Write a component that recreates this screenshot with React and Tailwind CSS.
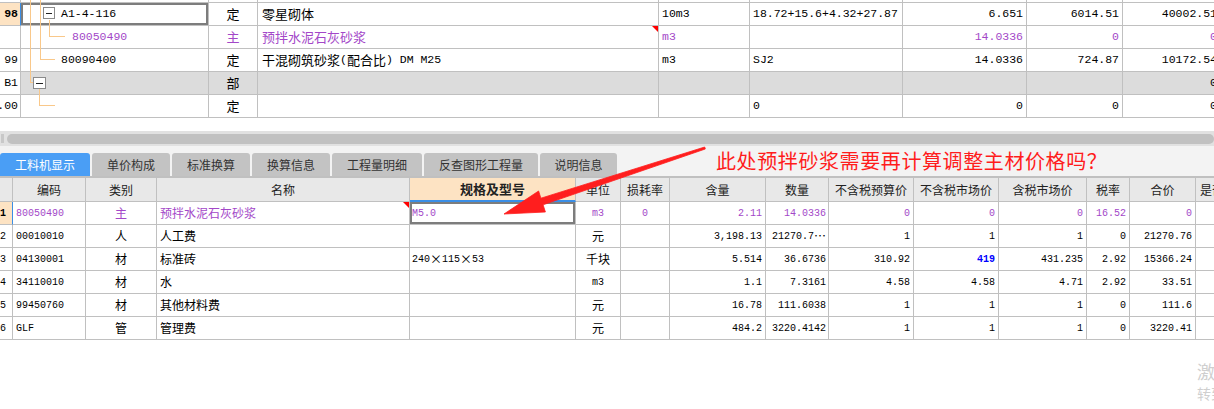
import React from 'react';

const PURPLE = 'text-[#a347c8]';
const LINE = 'border-[#c0c0c0]';

const TOP_LATIN = "font-['Liberation_Mono',monospace] text-[11.5px]";
const TOP_CJK = "font-['Noto_Sans_CJK_SC',sans-serif] text-[13px]";
const BOT_LATIN = "font-['Liberation_Mono',monospace] text-[10px]";
const BOT_CJK = "font-['Noto_Sans_CJK_SC',sans-serif] text-[12px]";

// ascii runs and CJK runs get different fonts, like the SimSun grid
const mix = (text, latin, cjk) =>
  String(text)
    .split(/([^\x00-\x7F]+)/)
    .map((part, i) => (part ? <span key={i} className={i % 2 ? cjk : latin}>{part}</span> : null));

const Flag = () => (
  <span className="absolute right-0 top-0 w-0 h-0 border-l-[6px] border-l-transparent border-t-[6px] border-t-[#ff0000]" />
);

const TOP_COLS = [
  { w: 'w-[21px]', a: 'justify-end pr-[2px]' },
  { w: 'w-[188px]', a: 'justify-start' },
  { w: 'w-[49px]', a: 'justify-center' },
  { w: 'w-[401px]', a: 'justify-start pl-[4px]' },
  { w: 'w-[91px]', a: 'justify-start pl-[3px]' },
  { w: 'w-[153px]', a: 'justify-start pl-[3px]' },
  { w: 'w-[124px]', a: 'justify-end pr-[3px]' },
  { w: 'w-[96px]', a: 'justify-end pr-[3px]' },
  { w: 'w-[98px]', a: 'justify-end pr-[3px]' },
];

const topRows = [
  { cells: ['98', 'A1-4-116', '定', '零星砌体', '10m3', '18.72+15.6+4.32+27.87', '6.651', '6014.51', '40002.51'], indent: 'pl-[40px]', current: true },
  { cells: ['', '80050490', '主', '预拌水泥石灰砂浆', 'm3', '', '14.0336', '0', '0'], indent: 'pl-[51px]', purple: true, flag: true },
  { cells: ['99', '80090400', '定', '干混砌筑砂浆(配合比) DM M25', 'm3', 'SJ2', '14.0336', '724.87', '10172.54'], indent: 'pl-[40px]' },
  { cells: ['B1', '', '部', '', '', '', '', '', '0'], indent: 'pl-[40px]', gray: true },
  { cells: ['1.00', '', '定', '', '', '0', '0', '0', '0'], indent: 'pl-[40px]' },
];

const BOT_COLS = [
  { w: 'w-[13px]', a: 'justify-start' },
  { w: 'w-[73px]', a: 'justify-start pl-[3px]' },
  { w: 'w-[71px]', a: 'justify-center' },
  { w: 'w-[253px]', a: 'justify-start pl-[3px]' },
  { w: 'w-[166px]', a: 'justify-start pl-[2px]' },
  { w: 'w-[45px]', a: 'justify-center' },
  { w: 'w-[49px]', a: 'justify-center' },
  { w: 'w-[96px]', a: 'justify-end pr-[3px]' },
  { w: 'w-[63px]', a: 'justify-end pr-[2px]' },
  { w: 'w-[85px]', a: 'justify-end pr-[3px]' },
  { w: 'w-[85px]', a: 'justify-end pr-[3px]' },
  { w: 'w-[88px]', a: 'justify-end pr-[3px]' },
  { w: 'w-[43px]', a: 'justify-end pr-[3px]' },
  { w: 'w-[66px]', a: 'justify-end pr-[3px]' },
  { w: 'w-[60px]', a: 'justify-start' },
];

const headers = ['', '编码', '类别', '名称', '规格及型号', '单位', '损耗率', '含量', '数量', '不含税预算价', '不含税市场价', '含税市场价', '税率', '合价', '是否暂估'];

const botRows = [
  ['1', '80050490', '主', '预拌水泥石灰砂浆', 'M5.0', 'm3', '0', '2.11', '14.0336', '0', '0', '0', '16.52', '0', ''],
  ['2', '00010010', '人', '人工费', '', '元', '', '3,198.13', '21270.7…', '1', '1', '1', '0', '21270.76', ''],
  ['3', '04130001', '材', '标准砖', '240×115×53', '千块', '', '5.514', '36.6736', '310.92', '419', '431.235', '2.92', '15366.24', ''],
  ['4', '34110010', '材', '水', '', 'm3', '', '1.1', '7.3161', '4.58', '4.58', '4.71', '2.92', '33.51', ''],
  ['5', '99450760', '材', '其他材料费', '', '元', '', '16.78', '111.6038', '1', '1', '1', '0', '111.6', ''],
  ['6', 'GLF', '管', '管理费', '', '元', '', '484.2', '3220.4142', '1', '1', '1', '0', '3220.41', ''],
];

const tabs = [
  { label: '工料机显示', w: 'w-[90px]', active: true },
  { label: '单价构成', w: 'w-[78px]' },
  { label: '标准换算', w: 'w-[78px]' },
  { label: '换算信息', w: 'w-[78px]' },
  { label: '工程量明细', w: 'w-[90px]' },
  { label: '反查图形工程量', w: 'w-[114px]' },
  { label: '说明信息', w: 'w-[77px]' },
];

function TreeLines() {
  const c = '#f9c88a';
  return (
    <svg className="absolute left-0 top-0 pointer-events-none" width="210" height="118">
      <g stroke={c} strokeWidth="1" fill="none" shapeRendering="crispEdges">
        <path d="M30.5 0 V82.5 H33" />
        <path d="M40.5 0 V59.5 H55" />
        <path d="M49.5 20 V36.5 H65" />
        <path d="M39.5 89 V105.5 H55" />
      </g>
      <g shapeRendering="crispEdges">
        <rect x="43.5" y="7.5" width="11" height="11" fill="#fff" stroke="#8a8a8a" />
        <path d="M46 13.5 H52" stroke="#222" />
        <rect x="33.5" y="77.5" width="12" height="11" fill="#fff" stroke="#8a8a8a" />
        <path d="M36 83.5 H43" stroke="#222" />
      </g>
    </svg>
  );
}

function TopGrid() {
  return (
    <div className="relative w-[1221px]">
      <div className="flex h-[3px]">
        {TOP_COLS.map((col, j) => (
          <div key={j} className={`${col.w} shrink-0 border-r border-b ${LINE}`} />
        ))}
      </div>
      {topRows.map((r, i) => (
        <div key={i} className="flex h-[23px]">
          {r.cells.map((c, j) => {
            const col = TOP_COLS[j];
            let extra = 'bg-white';
            if (j === 0 && r.current) extra = 'bg-[#fde3c3] font-bold border-r-[#3a8ee6]';
            if (j > 0 && r.gray) extra = 'bg-[#dcdcdc]';
            if (j === 1 && r.current) extra = 'bg-white shadow-[inset_0_0_0_2px_#7d7d7d]';
            const align = j === 1 ? r.indent : col.a;
            const color = r.purple && j > 0 ? PURPLE : 'text-black';
            return (
              <div
                key={j}
                className={`relative ${col.w} shrink-0 flex items-center overflow-hidden whitespace-nowrap border-r border-b ${LINE} ${align} ${color} ${extra}`}
              >
                {mix(c, TOP_LATIN, TOP_CJK)}
                {j === 3 && r.flag && <Flag />}
              </div>
            );
          })}
        </div>
      ))}
      <TreeLines />
    </div>
  );
}

function BottomGrid() {
  return (
    <div className="w-[1256px]">
      <div className="flex h-[24px] bg-[#e8e8e8]">
        {headers.map((h, j) => {
          const col = BOT_COLS[j];
          const spec = j === 4;
          return (
            <div
              key={j}
              className={`${col.w} shrink-0 flex items-center overflow-hidden whitespace-nowrap border-r border-b ${LINE} ${
                j === 14 ? 'justify-start pl-[4px]' : 'justify-center'
              } ${spec ? 'bg-[#fde3c3] font-bold text-[13px] border-b-2 border-b-[#3a8ee6]' : 'text-[12px]'} text-[#222] font-['Noto_Sans_CJK_SC',sans-serif]`}
            >
              {h}
            </div>
          );
        })}
      </div>
      {botRows.map((r, i) => (
        <div key={i} className="flex h-[23px]">
          {r.map((c, j) => {
            const col = BOT_COLS[j];
            const first = i === 0;
            let extra = 'bg-white';
            if (first && j === 0) extra = 'bg-[#fde3c3] font-bold border-r-[#3a8ee6]';
            if (first && j === 4) extra = 'bg-white shadow-[inset_0_0_0_2px_#7d7d7d]';
            let color = first && j > 0 ? PURPLE : 'text-black';
            if (c === '419') color = 'text-[#0000ff] font-bold';
            return (
              <div
                key={j}
                className={`relative ${col.w} shrink-0 flex items-center overflow-hidden whitespace-nowrap border-r border-b ${LINE} ${col.a} ${color} ${extra}`}
              >
                {mix(c, BOT_LATIN, BOT_CJK)}
                {first && j === 3 && <Flag />}
              </div>
            );
          })}
        </div>
      ))}
    </div>
  );
}

function Arrow() {
  return (
    <svg className="absolute left-0 top-0 pointer-events-none" width="1214" height="409">
      <polygon
        points="704.7,147 540.9,198.2 538.6,191 504,214 545.4,212 543.1,204.8 705.3,149"
        fill="#ff1e1e"
        stroke="#ff1e1e"
        strokeWidth="0.8"
        strokeLinejoin="round"
      />
    </svg>
  );
}

export default function App() {
  return (
    <div className="relative w-[1214px] h-[409px] overflow-hidden bg-white font-['Noto_Sans_CJK_SC',sans-serif]">
      <TopGrid />

      <div className="h-[13px]" />

      {/* horizontal scrollbar */}
      <div className="flex items-center h-[15px] bg-[#e1e1e1]">
        <div className="w-[3px] h-[9px] ml-[1px] bg-[#c8c8c8]" />
        <div className="flex-1 h-[10px] ml-[3px] rounded-full bg-[#c1c1c1]" />
      </div>

      {/* tabs */}
      <div className="flex h-[32px] bg-[#f3f3f3] border-b-2 border-[#c0c0c0]">
        <div className="flex items-end gap-[2px]">
          {tabs.map((t) => (
            <div
              key={t.label}
              className={`${t.w} h-[23px] flex items-center justify-center rounded-t-[3px] text-[12px] ${
                t.active ? 'bg-[#4a9ef5] text-white' : 'bg-[#c3c3c3] text-[#333]'
              }`}
            >
              {t.label}
            </div>
          ))}
        </div>
        <div className="self-center ml-[99px] text-[20px] leading-[24px] tracking-[0.6px] text-[#ff1c1c]">
          此处预拌砂浆需要再计算调整主材价格吗？
        </div>
      </div>

      <BottomGrid />

      <Arrow />

      <div className="absolute left-[1197px] top-[359px] w-[60px] text-[#cfcfcf] whitespace-nowrap">
        <div className="text-[18px] leading-[24px]">激活 Windows</div>
        <div className="text-[14px] leading-[20px]">转到设置</div>
      </div>
    </div>
  );
}
